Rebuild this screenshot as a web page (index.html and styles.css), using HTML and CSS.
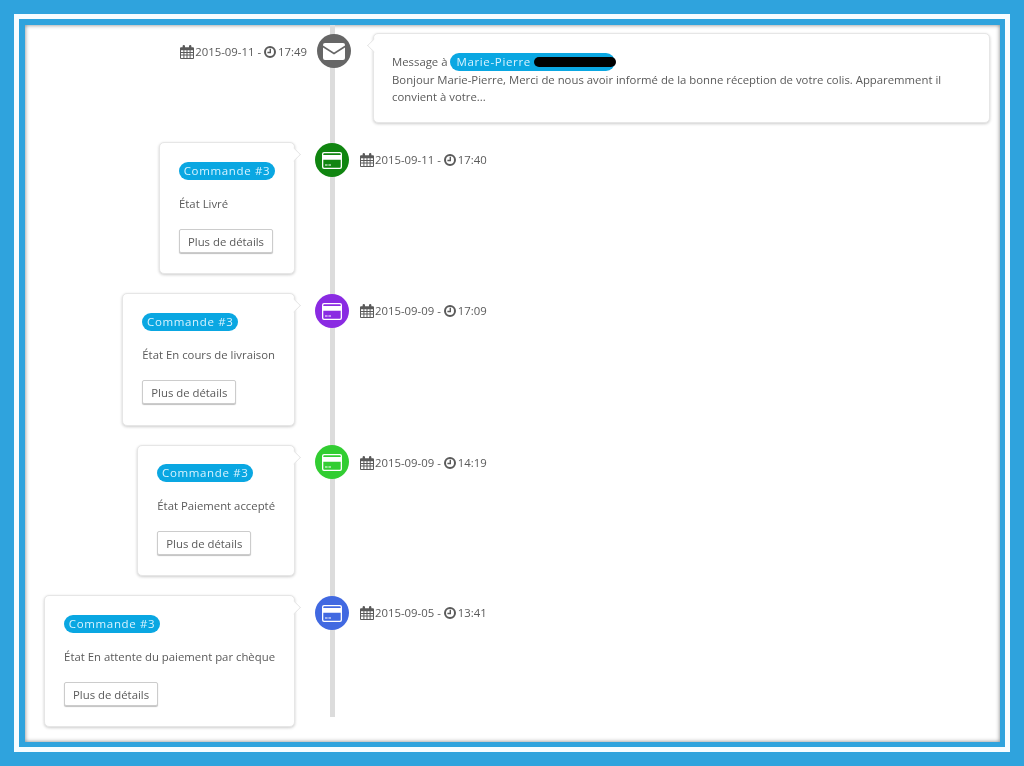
FILE: index.html
```html
<!DOCTYPE html>
<html lang="fr">
<head>
<meta charset="utf-8">
<title>Historique</title>
<link rel="stylesheet" href="styles.css">
</head>
<body>
<svg class="defs" width="0" height="0" aria-hidden="true">
  <symbol id="cal" viewBox="0 0 14 14">
    <path fill="currentColor" fill-rule="evenodd" d="M1 2.2h1.6V1.2a1 1 0 0 1 2.4 0v1h4v-1a1 1 0 0 1 2.4 0v1H13a1 1 0 0 1 1 1V13a1 1 0 0 1-1 1H1a1 1 0 0 1-1-1V3.200a1 1 0 0 1 1-1zM1 5.300v1.700h2.400V5.300zm3.400 0v1.700h2.100V5.300zm3.100 0v1.700h2.100V5.300zm3.100 0v1.700H13V5.300zM1 8v1.600h2.400V8zm3.400 0v1.600h2.100V8zm3.100 0v1.600h2.100V8zm3.100 0v1.600H13V8zM1 10.600V13h2.400v-2.400zm3.400 0V13h2.100v-2.400zm3.100 0V13h2.100v-2.400zm3.100 0V13H13v-2.400z"/>
  </symbol>
  <symbol id="clock" viewBox="0 0 12 12">
    <circle cx="6" cy="6" r="5" fill="none" stroke="currentColor" stroke-width="2"/>
    <path fill="none" stroke="currentColor" stroke-width="1.400" d="M6.300 2.800v3.700H3.400"/>
  </symbol>
  <symbol id="card" viewBox="0 0 20 17">
    <path fill="#fff" fill-rule="evenodd" d="M2 0h16a2 2 0 0 1 2 2v13a2 2 0 0 1-2 2H2a2 2 0 0 1-2-2V2a2 2 0 0 1 2-2zM1.300 2.200v.8h17.400v-.8a1 1 0 0 0-1-1H2.300a1 1 0 0 0-1 1zm0 5.500V14.700a1 1 0 0 0 1 1h15.400a1 1 0 0 0 1-1V7.700zM3 12.600h2.600v.9H3zm3.400 0h2.600v.9H6.400z"/>
  </symbol>
  <symbol id="mail" viewBox="0 0 22 17">
    <path fill="#fff" d="M2 0h18a2 2 0 0 1 2 2v.6L11 9.600 0 2.600V2a2 2 0 0 1 2-2z"/>
    <path fill="#fff" d="M0 4.600l11 7 11-7V15a2 2 0 0 1-2 2H2a2 2 0 0 1-2-2z"/>
  </symbol>
</svg>

<div class="frame-white">
  <div class="frame-blue">
    <main class="content">
      <div class="line"></div>

      <section class="row row-first">
        <div class="side side-left side-stamp">
          <div class="stamp">
            <svg class="ico-cal"><use href="#cal"/></svg><span>2015-09-11 -</span><svg class="ico-clock"><use href="#clock"/></svg><span>17:49</span>
          </div>
        </div>
        <div class="marker marker-mail"><svg class="ico-mail"><use href="#mail"/></svg></div>
        <div class="side">
          <article class="card card-right">
            <div class="msg-head">Message à <span class="badge badge-name">Marie-Pierre<span class="redact"></span></span></div>
            <div>Bonjour Marie-Pierre, Merci de nous avoir informé de la bonne réception de votre colis. Apparemment il convient à votre...</div>
          </article>
        </div>
      </section>

      <section class="row">
        <div class="side side-left">
          <article class="card card-left">
            <span class="badge">Commande #3</span>
            <p class="state">État Livré</p>
            <button class="btn" type="button">Plus de détails</button>
          </article>
        </div>
        <div class="marker marker-green"><svg class="ico-card"><use href="#card"/></svg></div>
        <div class="side">
          <div class="stamp">
            <svg class="ico-cal"><use href="#cal"/></svg><span>2015-09-11 -</span><svg class="ico-clock"><use href="#clock"/></svg><span>17:40</span>
          </div>
        </div>
      </section>

      <section class="row">
        <div class="side side-left">
          <article class="card card-left card-tall">
            <span class="badge">Commande #3</span>
            <p class="state">État En cours de livraison</p>
            <button class="btn" type="button">Plus de détails</button>
          </article>
        </div>
        <div class="marker marker-purple"><svg class="ico-card"><use href="#card"/></svg></div>
        <div class="side">
          <div class="stamp">
            <svg class="ico-cal"><use href="#cal"/></svg><span>2015-09-09 -</span><svg class="ico-clock"><use href="#clock"/></svg><span>17:09</span>
          </div>
        </div>
      </section>

      <section class="row">
        <div class="side side-left">
          <article class="card card-left card-short">
            <span class="badge">Commande #3</span>
            <p class="state">État Paiement accepté</p>
            <button class="btn" type="button">Plus de détails</button>
          </article>
        </div>
        <div class="marker marker-lime"><svg class="ico-card"><use href="#card"/></svg></div>
        <div class="side">
          <div class="stamp">
            <svg class="ico-cal"><use href="#cal"/></svg><span>2015-09-09 -</span><svg class="ico-clock"><use href="#clock"/></svg><span>14:19</span>
          </div>
        </div>
      </section>

      <section class="row">
        <div class="side side-left">
          <article class="card card-left">
            <span class="badge">Commande #3</span>
            <p class="state">État En attente du paiement par chèque</p>
            <button class="btn" type="button">Plus de détails</button>
          </article>
        </div>
        <div class="marker marker-royal"><svg class="ico-card"><use href="#card"/></svg></div>
        <div class="side">
          <div class="stamp">
            <svg class="ico-cal"><use href="#cal"/></svg><span>2015-09-05 -</span><svg class="ico-clock"><use href="#clock"/></svg><span>13:41</span>
          </div>
        </div>
      </section>
    </main>
  </div>
</div>
</body>
</html>
```

FILE: styles.css
```css
* { box-sizing: border-box; }

html, body {
  margin: 0;
  height: 766px;
  overflow: hidden;
}

body {
  background: #2fa3dd;
  padding: 14px;
  font-family: "Open Sans", "Liberation Sans", sans-serif;
  font-size: 11.350px;
  line-height: 18px;
  color: #5a5a5a;
}

.defs { position: absolute; }

.frame-white {
  height: 738px;
  border: 5px solid #f6fcff;
  filter: blur(.4px);
}

.frame-blue {
  height: 100%;
  border: 5px solid #2fa3dd;
  border-top-width: 6px;
  border-left-width: 6px;
}

.content {
  position: relative;
  height: 100%;
  padding-top: 8px;
  background: #fff;
  box-shadow: inset 0 0 4px rgba(40, 40, 40, .6);
}

.line {
  position: absolute;
  left: 305px;
  top: 0;
  width: 5px;
  height: 692px;
  background: #dcdcdc;
}

.row {
  position: relative;
  display: flex;
  align-items: flex-start;
  margin-bottom: 19px;
}

.side { flex: 1 1 0; min-width: 0; }

.side-left {
  flex: 0 0 270px;
  display: flex;
  justify-content: flex-end;
}

.side-stamp { flex-basis: 282px; }

.marker {
  flex: none;
  width: 34px;
  height: 34px;
  margin: 1px 11px 0 20px;
  border-radius: 50%;
  display: flex;
  align-items: center;
  justify-content: center;
}

.marker-mail { margin: 1px 22px 0 10px; background: #666; }
.marker-green { background: #108510; }
.marker-purple { background: #8a2be2; }
.marker-lime { margin-top: 0; background: #32cd32; }
.marker-royal { background: #4169e1; }

.ico-mail { width: 22px; height: 17px; }
.ico-card { width: 20px; height: 17px; }

.stamp {
  display: flex;
  align-items: center;
  height: 18px;
  margin-top: 9px;
  color: #5a5a5a;
  white-space: nowrap;
}

.row-first .stamp { margin-top: 10px; }

.ico-cal { width: 14px; height: 14px; margin-right: 1px; }
.ico-clock { width: 12px; height: 12px; margin: 0 2px 0 3px; }

.card {
  position: relative;
  background: #fff;
  border: 1px solid #e6e6e6;
  border-radius: 5px;
  box-shadow: 0 1px 3px rgba(0, 0, 0, .2);
}

.card::after {
  content: "";
  position: absolute;
  top: 6px;
  width: 9px;
  height: 9px;
  background: #fff;
  border: 1px solid #e6e6e6;
  transform: rotate(45deg);
}

.card-right {
  width: 617px;
  height: 90px;
  padding: 19px 19px 0 18px;
  line-height: 17px;
}

.card-right::after {
  left: -5px;
  border-top-color: transparent;
  border-right-color: transparent;
  clip-path: polygon(0 0, 0 100%, 100% 100%);
}

.card-left {
  height: 132px;
  padding: 19px 19px 0 19px;
}

.card-left::after {
  right: -5px;
  border-bottom-color: transparent;
  border-left-color: transparent;
  clip-path: polygon(0 0, 100% 0, 100% 100%);
}

.card-tall { height: 133px; }
.card-short { height: 131px; padding-top: 18px; }

.msg-head { white-space: nowrap; }

.badge {
  display: block;
  width: 96px;
  height: 18px;
  border-radius: 9px;
  background: #0aa7e2;
  color: #d8f3ff;
  font-size: 11.500px;
  line-height: 18px;
  text-align: center;
  letter-spacing: .65px;
}

.badge-name {
  display: inline-flex;
  align-items: center;
  width: 165px;
  padding-left: 6px;
  gap: 3px;
  vertical-align: top;
}

.redact {
  flex: none;
  width: 82px;
  height: 10px;
  border-radius: 5px;
  background: #000;
}

.state {
  margin: 15px 0 16px;
  white-space: nowrap;
  line-height: 18px;
}

.btn {
  display: block;
  width: 94px;
  height: 24px;
  padding: 1px 0 0;
  background: #fff;
  border: 1px solid #ccc;
  border-radius: 2px;
  box-shadow: 0 1px 1px rgba(0, 0, 0, .25);
  font: inherit;
  color: #5a5a5a;
}
```
